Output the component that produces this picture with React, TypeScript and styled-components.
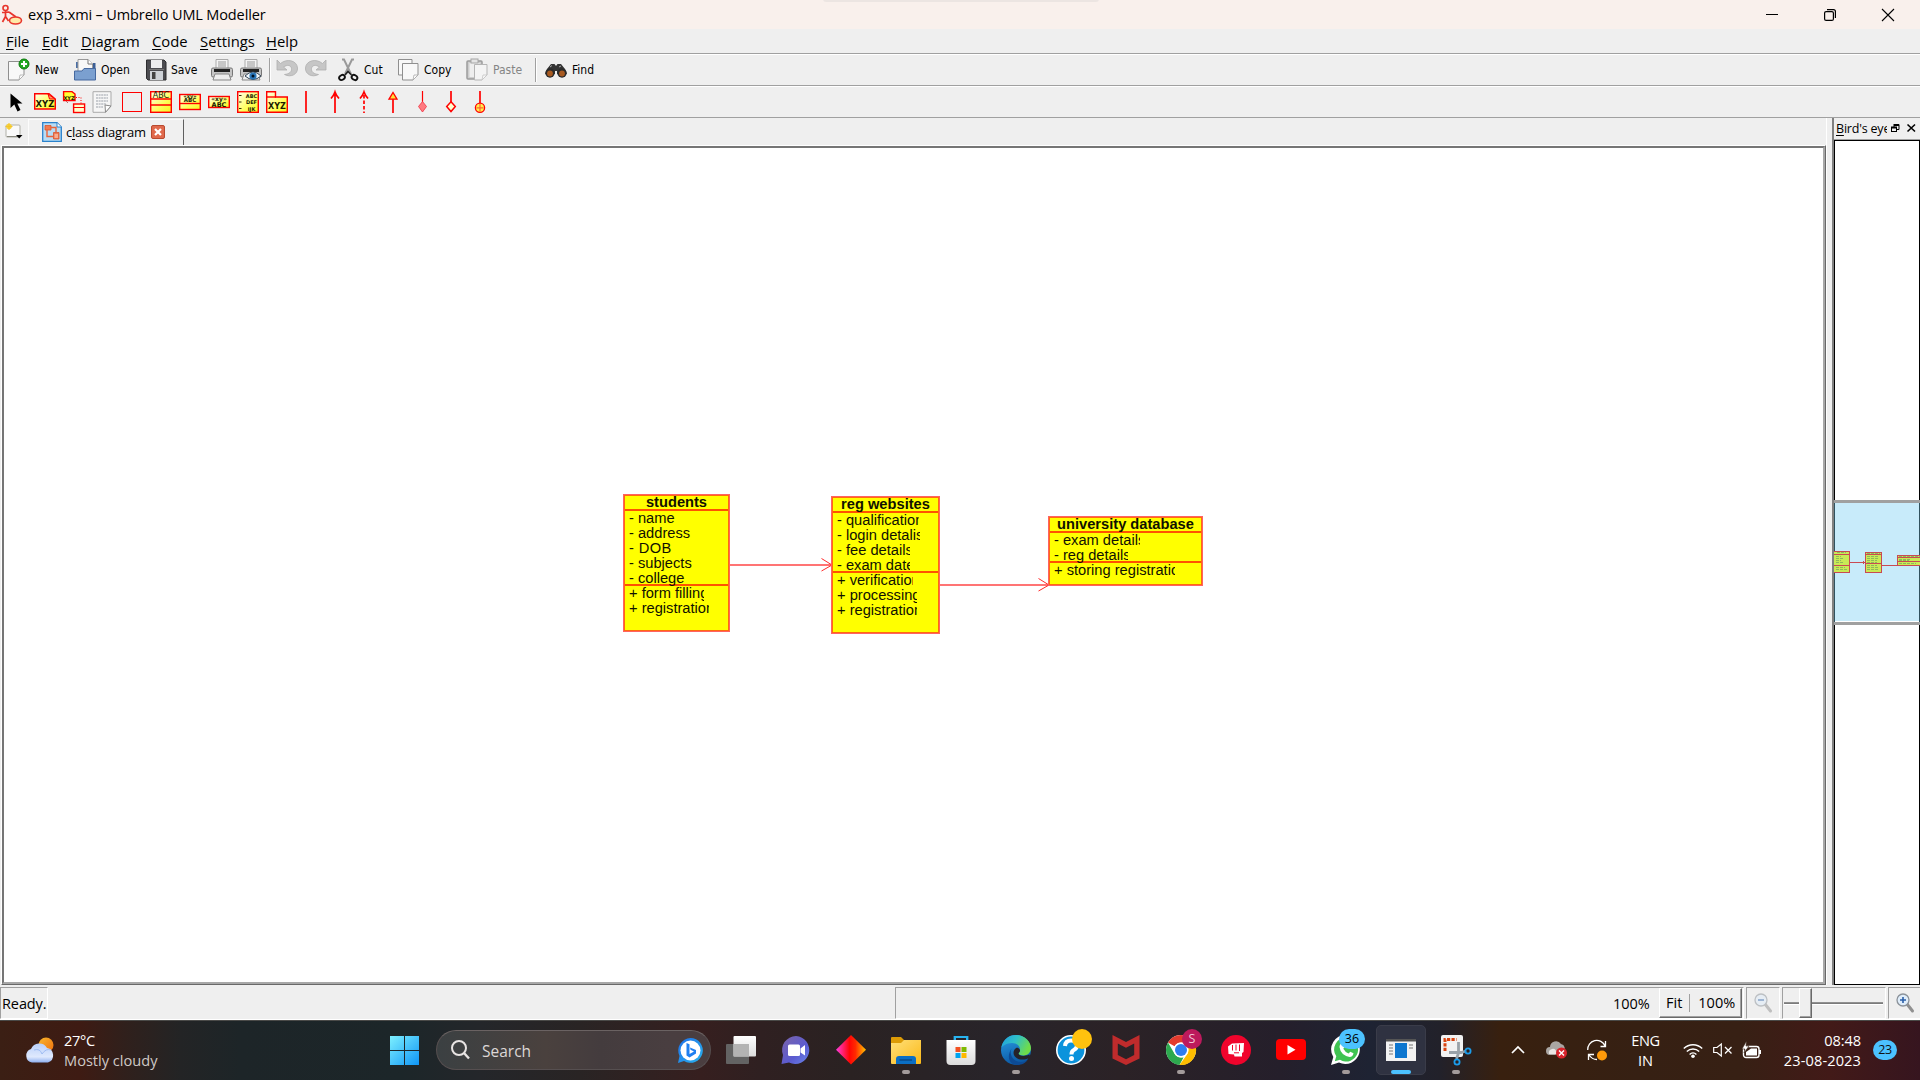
import React from "react";
import styled, { createGlobalStyle } from "styled-components";

const UI = `"Open Sans", "Noto Sans", sans-serif`;
const TOOL = `"DejaVu Sans Condensed", "DejaVu Sans", sans-serif`;

const Global = createGlobalStyle`
  * { box-sizing: border-box; }
  html, body { margin: 0; padding: 0; overflow: hidden; }
  svg { display: block; flex: none; overflow: visible; }
`;

const Screen = styled.div`
  width: 1920px; height: 1080px; display: flex; flex-direction: column;
  background: #efefef; color: #000; font-family: ${UI}; font-size: 14.5px; overflow: hidden;
`;

const Txt = styled.span<{ $ls?: number; $size?: number; $color?: string }>`
  white-space: pre;
  letter-spacing: ${(p) => p.$ls ?? 0}px;
  font-size: ${(p) => (p.$size ? p.$size + "px" : "inherit")};
  color: ${(p) => p.$color ?? "inherit"};
  u { text-decoration-thickness: 1px; text-underline-offset: 2px; }
`;

/* ---------- title + menu ---------- */
const TitleBar = styled.header`
  position: relative; height: 29px; flex: none; display: flex; align-items: center; background: #f9f0ec; padding-left: 2px;
`;
const TitleText = styled(Txt)`margin-left: 6px; line-height: 20px; margin-top: 1px;`;
const TopPill = styled.div`
  position: absolute; left: 823px; top: -4px; width: 276px; height: 6px; border-radius: 4px; background: #ece5e2;
`;
const WinButtons = styled.div`margin-left: auto; display: flex; height: 28px; padding-right: 3px;`;
const WinButton = styled.div`width: 58px; display: flex; align-items: center; justify-content: center;`;

const MenuBar = styled.nav`height: 24px; flex: none; display: flex; padding-left: 6px; line-height: 25px;`;
const MenuItem = styled.div<{ $w: number }>`width: ${(p) => p.$w}px;`;

/* ---------- toolbars ---------- */
const ToolBar = styled.div<{ $h: number; $pl: number }>`
  height: ${(p) => p.$h}px; flex: none; display: flex; align-items: center;
  padding-left: ${(p) => p.$pl}px; border-top: 1px solid #a0a0a0; box-shadow: inset 0 1px 0 #fff;
  font-family: ${TOOL}; font-size: 12px;
`;
const ToolButton = styled.div<{ $w: number; $icon: number; $off?: boolean }>`
  width: ${(p) => p.$w}px; display: flex; align-items: center; color: ${(p) => (p.$off ? "#858585" : "#000")};
  & > svg { margin-right: ${(p) => p.$icon - 22}px; }
  & > span { padding-top: 1px; }
`;
const ToolSep = styled.div<{ $w: number }>`
  width: ${(p) => p.$w}px; height: 24px; border-left: 1px solid #a0a0a0; box-shadow: inset 1px 0 0 #fff;
`;
const ShapeButton = styled.div`width: 29px; height: 22px; padding-left: 4px; flex: none;`;

/* ---------- work area ---------- */
const Work = styled.div`height: 868px; flex: none; display: flex; border-top: 1px solid #a0a0a0;`;
const Main = styled.div`width: 1826px; display: flex; flex-direction: column;`;
const TabRow = styled.div`height: 27px; display: flex; align-items: center;`;
const NewTab = styled.div`width: 28px; height: 27px; padding: 4px 0 0 4px;`;
const Tab = styled.div`
  width: 156px; height: 26px; align-self: flex-end; display: flex; align-items: center; padding: 0 0 2px 13px;
  border-top: 1px solid #fafafa; border-left: 1px solid #fcfcfc; border-right: 1px solid #5f5f5f; background: #f0f0f0;
`;
const TabText = styled(Txt)`width: 85px; margin-left: 4px; line-height: 20px;`;
const Frame = styled.div`
  margin-left: 1px; flex: 1; border: 1px solid; border-color: #fff #696969 #696969 #fff;
`;
const FrameInner = styled.div`
  width: 100%; height: 100%; border: 2px solid; border-color: #757575 #a8a8a8 #a8a8a8 #757575; background: #fff;
`;
const Canvas = styled.div`position: relative; width: 100%; height: 100%; overflow: hidden;`;

const Dock = styled.aside`
  width: 94px; display: flex; flex-direction: column; border-left: 1px solid #fff; padding-left: 5px;
`;
const DockBody = styled.div`flex: 1; display: flex; flex-direction: column; border-left: 2px solid #808080; min-width: 0;`;
const DockHead = styled.div`height: 22px; flex: none; display: flex; align-items: center; padding: 0 4px 1px 2px; border-bottom: 1px solid #a0a0a0;`;
const DockTitle = styled(Txt)`width: 51px; overflow: hidden; margin-right: 4px; line-height: 20px; padding-top: 1px;`;
const Bird = styled.div`
  flex: 1; border: 1px solid #000; background: #fff; display: flex; flex-direction: column;
  padding-top: 359px;
`;
const BirdView = styled.div`
  height: 125px; margin: 0 -1px; border-top: 3px solid #a0a0a0; border-bottom: 3px solid #a0a0a0;
  background: #c8ebfa; box-shadow: inset 1px 0 0 #31525e, inset -1px 0 0 #31525e, inset 0 -1px 0 #fff; overflow: hidden;
`;

/* ---------- UML nodes ---------- */
const Node = styled.div<{ $x: number; $y: number; $w: number; $h: number }>`
  position: absolute; left: ${(p) => p.$x - 4}px; top: ${(p) => p.$y - 148}px; width: ${(p) => p.$w}px; height: ${(p) => p.$h}px;
  background: #ff0; border: 1px solid #ff6262; box-shadow: inset 0 0 0 1px #ff6a10; padding: 1px;
  font-family: "Liberation Sans", Arial, sans-serif; font-size: 14.67px; color: #111100;
`;
const NodeTitle = styled.div`
  height: 15px; line-height: 13px; font-weight: bold; text-align: center; border-bottom: 2px solid #ff5200; white-space: pre;
`;
const NodeList = styled.div<{ $h: number; $last?: boolean }>`
  height: ${(p) => p.$h}px; border-bottom: ${(p) => (p.$last ? "0" : "2px solid #ff5200")};
`;
const Member = styled.div<{ $w: number; $ls?: number }>`
  margin-left: 4px; width: ${(p) => p.$w}px; height: 15px; line-height: 14px; overflow: hidden; white-space: pre;
  letter-spacing: ${(p) => p.$ls ?? 0}px;
`;
const Links = styled.svg`position: absolute; left: -4px; top: -148px;`;

/* ---------- status bar ---------- */
const Status = styled.footer`height: 35px; flex: none; display: flex; align-items: flex-start; padding-top: 2px; border-bottom: 1px solid #fff; line-height: 31px;`;
const Sunken = styled.div<{ $w: number; $ml?: number; $pl?: number }>`
  width: ${(p) => p.$w}px; height: 32px; margin-left: ${(p) => p.$ml ?? 0}px; padding-left: ${(p) => p.$pl ?? 0}px;
  flex: none; display: flex; align-items: center;
  border: 1px solid; border-color: #a0a0a0 #fff #fff #a0a0a0;
`;
const ZoomNow = styled.div`margin-left: auto; width: 46px;`;
const Raised = styled.div`
  width: 83px; height: 30px; display: flex; align-items: center; padding-left: 6px; line-height: 28px; margin-right: 1px;
  border: 1px solid; border-color: #fff #696969 #696969 #fff; box-shadow: inset -1px -1px 0 #a0a0a0;
`;
const FitSep = styled.div`width: 1px; height: 18px; background: #a0a0a0; margin: 0 8px 0 7px;`;
const Slider = styled.div`width: 100px; height: 30px; margin-left: 1px; display: flex; align-items: center;`;
const Rail = styled.div<{ $w: number }>`width: ${(p) => p.$w}px; height: 3px; border-top: 1px solid #909090; border-bottom: 1px solid #fff; background: #7a7a7a;`;
const Handle = styled.div`
  width: 13px; height: 30px; border: 1px solid; border-color: #fff #696969 #696969 #fff; box-shadow: inset -1px -1px 0 #a0a0a0;
`;

/* ---------- taskbar ---------- */
const TaskBar = styled.div`
  height: 60px; flex: none; display: flex; color: #fff; border-top: 1px solid #4a4a48; font-size: 14.6px;
  background: linear-gradient(90deg, #3b1f14 0, #3e1b13 80px, #30201c 125px, #232425 180px, #1d2528 240px, #1c2629 400px, #24262a 480px, #292424 580px, #361f1f 700px, #2f2021 760px, #2a2222 850px, #28242a 1000px, #2b2226 1120px, #251f2b 1280px, #1e2333 1370px, #22212a 1440px, #38200f 1500px, #362013 1640px, #372014 1740px, #421a18 1830px, #36151f 1920px);
`;
const Weather = styled.div`width: 389px; display: flex; align-items: center; padding-left: 24px; height: 58px;`;
const Stack = styled.div<{ $right?: boolean; $center?: boolean; $ml?: number; $w?: number }>`
  display: flex; flex-direction: column; line-height: 20px; margin-left: ${(p) => p.$ml ?? 0}px;
  width: ${(p) => (p.$w ? p.$w + "px" : "auto")};
  align-items: ${(p) => (p.$right ? "flex-end" : p.$center ? "center" : "flex-start")};
`;
const Start = styled.div`width: 47px; padding: 15px 0 0 1px;`;
const Search = styled.div`
  width: 275px; height: 40px; margin-top: 9px; border-radius: 20px; display: flex; align-items: center; padding-left: 14px;
  background: linear-gradient(90deg, #3b4042, #4a413e 40%, #443c3e 60%, #493e40 85%, #4a3e40);
  border: 1px solid #564f50; border-top-color: #6a6262;
`;
const SearchText = styled(Txt)`margin-left: 12px; width: 196px; padding-top: 1px;`;
const Apps = styled.div`display: flex; margin-left: 5px;`;
const AppSlot = styled.div<{ $active?: boolean }>`
  position: relative; width: 50px; height: 50px; margin: 4px 5px 0 0; border-radius: 5px; padding: 9px 0 0 9px;
  background: ${(p) => (p.$active ? "#2f3241" : "transparent")}; border: 1px solid ${(p) => (p.$active ? "#3a3c49" : "transparent")};
`;
const Mark = styled.i<{ $active?: boolean }>`
  position: absolute; bottom: 0; left: ${(p) => (p.$active ? 14 : 20)}px; width: ${(p) => (p.$active ? 20 : 8)}px; height: 4px; border-radius: 2px;
  background: ${(p) => (p.$active ? "#4cc2ff" : "#a39b9b")};
`;
const Badge = styled.span<{ $x: number; $y: number; $w: number; $h: number; $bg: string; $fg?: string }>`
  position: absolute; left: ${(p) => p.$x}px; top: ${(p) => p.$y}px; width: ${(p) => p.$w}px; height: ${(p) => p.$h}px;
  border-radius: 10px; background: ${(p) => p.$bg}; color: ${(p) => p.$fg ?? "#000"}; font-size: 12.5px; line-height: ${(p) => p.$h}px; text-align: center;
`;
const Tray = styled.div`margin-left: 25px; display: flex; align-items: center; flex: 1; height: 58px;`;
const TrayCell = styled.div<{ $w: number }>`width: ${(p) => p.$w}px; display: flex; flex: none;`;
const Count = styled.div`
  width: 24px; height: 20px; margin-left: 12px; border-radius: 10px; background: #4cc2ff; color: #111; font-size: 12.5px;
  line-height: 20px; text-align: center; letter-spacing: -0.5px;
`;

/* ---------- icons ---------- */
const Svg = ({ w = 22, h = 22, children }: { w?: number; h?: number; children: React.ReactNode }) => (
  <svg width={w} height={h} viewBox={`0 0 ${w} ${h}`} fill="none">{children}</svg>
);
const Page = ({ x = 0, y = 0, w = 15, h = 18, o = 1 }) => (
  <g transform={`translate(${x} ${y})`} opacity={o}>
    <path d={`M.5 .5H${w}V${h - 5}L${w - 5} ${h}H.5Z`} fill="#f8f8f8" stroke="#8f8f8f" />
    <path d={`M${w} ${h - 5}H${w - 4}L${w - 5} ${h}Z`} fill="#fff" stroke="#a8a8a8" strokeWidth=".8" />
  </g>
);
const Printer = ({ eye }: { eye?: boolean }) => (
  <Svg>
    <path d="M5 .5H17V10H5Z" fill="#f4f4f4" stroke="#aaa" />
    <path d="M7 3H15M7 5H15M7 7H15" stroke="#999" />
    <rect x=".5" y="9" width="21" height="9" rx="1.5" fill="#c4c4c4" stroke="#777" />
    <rect x="3" y="10" width="16" height="3" fill="#222" />
    <path d="M4 15H18L20 21H2Z" fill="#eee" stroke="#888" />
    {eye && (<><path d="M5 17Q13 9 21 17Q13 24 5 17Z" fill="#f4f8fb" stroke="#345" /><circle cx="13" cy="17" r="3.6" fill="#2a76b8" /><circle cx="13" cy="17" r="1.5" fill="#012" /></>)}
  </Svg>
);
const Undo = ({ flip }: { flip?: boolean }) => (
  <Svg><g transform={flip ? "translate(22 0) scale(-1 1)" : undefined}>
    <path d="M1 1L1 11H11L7.5 8C11 5.500 15 6 15.500 9.500C16 13 13 15 8.500 15.500C15 19 22 15 21.500 9C21 1.500 11 -1 4.500 4.500Z" fill="#c6c6c6" stroke="#aeaeae" strokeWidth=".8" />
  </g></Svg>
);
const GradientDefs = () => (
  <svg width="0" height="0" style={{ position: "absolute" }}>
    <defs>
      <linearGradient id="yel" x1="0" y1="0" x2="1" y2="1"><stop offset="0" stopColor="#fffff0" /><stop offset=".6" stopColor="#ffff5a" /><stop offset="1" stopColor="#f5f520" /></linearGradient>
      <linearGradient id="win" gradientUnits="userSpaceOnUse" x1="0" y1="0" x2="29" y2="29"><stop offset="0" stopColor="#7df0ff" /><stop offset="1" stopColor="#0f95f5" /></linearGradient>
      <linearGradient id="dia" x1="0" y1="0" x2="1" y2="0"><stop offset="0" stopColor="#ff3de0" /><stop offset=".45" stopColor="#ff0505" /><stop offset=".65" stopColor="#ff2a00" /><stop offset="1" stopColor="#ffc400" /></linearGradient>
      <linearGradient id="cht" x1="0" y1="0" x2="1" y2="1"><stop offset="0" stopColor="#7c64a8" /><stop offset=".6" stopColor="#5b5bd0" /><stop offset="1" stopColor="#6a86ea" /></linearGradient>
      <linearGradient id="fol" x1="0" y1="0" x2="1" y2="1"><stop offset="0" stopColor="#ffe07a" /><stop offset="1" stopColor="#fbb917" /></linearGradient>
      <linearGradient id="edg" x1="0" y1="0" x2="1" y2=".4"><stop offset="0" stopColor="#1f9de0" /><stop offset=".5" stopColor="#2fc0c8" /><stop offset="1" stopColor="#6fdc4a" /></linearGradient>
      <linearGradient id="ed2" x1="0" y1="0" x2=".3" y2="1"><stop offset="0" stopColor="#2a9ee6" /><stop offset="1" stopColor="#0c59a4" /></linearGradient>
      <linearGradient id="cld" x1="0" y1="0" x2="0" y2="1"><stop offset="0" stopColor="#b9d0fa" /><stop offset=".7" stopColor="#dfe9fd" /><stop offset="1" stopColor="#8fb0f0" /></linearGradient>
      <linearGradient id="sun" x1="0" y1="0" x2="1" y2="1"><stop offset="0" stopColor="#f8b62c" /><stop offset="1" stopColor="#f0700e" /></linearGradient>
      <linearGradient id="gry" x1="0" y1="0" x2="0" y2="1"><stop offset="0" stopColor="#fff" /><stop offset="1" stopColor="#dcdcdc" /></linearGradient>
      <linearGradient id="bin" x1="0" y1="0" x2="1" y2="1"><stop offset="0" stopColor="#1f6fe8" /><stop offset="1" stopColor="#28b4f0" /></linearGradient>
    </defs>
  </svg>
);
const red = { stroke: "#f00", strokeWidth: 1.4 };
const T = ({ x, y, s, children, b = true }: { x: number; y: number; s: number; children: string; b?: boolean }) => (
  <text x={x} y={y} fontSize={s} fontFamily="DejaVu Sans, sans-serif" fontWeight={b ? 700 : 400} fill="#1a1a00" textAnchor="middle" xmlSpace="preserve">{children}</text>
);
const shapes: React.ReactNode[] = [
  <path d="M5.500 2.500V17L9.300 13.500L12.500 20.500L15.500 19L12.300 12.500H17.500Z" fill="#000" />,
  <><path d="M.7 2.700H15L21.300 8V18H.7Z" fill="url(#yel)" {...red} /><path d="M14 3L15.500 8H21Z" fill="#ff9a60" {...red} strokeWidth={1} /><T x={11} y={16} s={8.5}>XYZ</T></>,
  <><path d="M.6 .6H9L12 3V9.500H.6Z" fill="#ff3" {...red} /><T x={6} y={8.5} s={5}>XYZ</T><path d="M13 6.500H18V13" stroke="#f00" strokeDasharray="1 1.500" /><rect x="10.600" y="13" width="11" height="8.500" fill="#ffc" {...red} /><path d="M11 16.500H21" {...red} strokeWidth={1} /><path d="M3 10L5 12" stroke="#b66" /></>,
  <><path d="M1 .7H19V15L13.500 21.300H1Z" fill="#f6f6f6" stroke="#aaa" /><path d="M4 4H16M4 7H16M4 10H16M4 13H14M4 16H11" stroke="#9a9fa8" strokeWidth="1.200" strokeDasharray="2 .6" /><path d="M19 15L13 14L13.500 21.300Z" fill="#fff" stroke="#888" /></>,
  <rect x="1.500" y="1.500" width="19" height="19" {...red} strokeWidth={1} />,
  <><rect x=".7" y=".7" width="20.600" height="20.600" fill="url(#yel)" {...red} /><T x={11} y={7} s={8} b={false}>ABC</T><path d="M1 8H21M1 14H21" {...red} /></>,
  <><rect x=".7" y="3.500" width="20.600" height="15" fill="url(#yel)" {...red} /><T x={11} y={7} s={5}>«xy»</T><T x={11} y={11.2} s={5.5}>ABC</T><path d="M1 12.500H21" {...red} /></>,
  <><rect x=".7" y="5.500" width="20.600" height="11" fill="url(#yel)" {...red} /><T x={11} y={9.5} s={6}>«xy»</T><T x={11} y={15.5} s={6.5}>ABC</T></>,
  <><rect x=".7" y=".7" width="20.600" height="20.600" fill="url(#yel)" {...red} /><T x={14.5} y={6.5} s={5}>ABC</T><T x={14.5} y={13} s={5}>DEF</T><T x={14.5} y={19.5} s={5}>IJK</T><path d="M2 4.500H4.500M2 11H4.500M2 17.500H4.500" stroke="#330" /></>,
  <><path d="M.7 .7H9.500V6H21.300V21.300H.7Z" fill="url(#yel)" {...red} /><path d="M1 6H10" {...red} /><T x={11} y={18} s={8}>XYZ</T></>,
  <path d="M11 0V22" stroke="#f00" strokeWidth="1.700" />,
  <path d="M11 1V22M7 7.500Q10 4 11 1Q12 4 15 7.500" stroke="#f00" strokeWidth="1.700" />,
  <><path d="M11 4V22" stroke="#f00" strokeWidth="1.700" strokeDasharray="3.500 2" /><path d="M7 7.500Q10 4 11 1Q12 4 15 7.500" stroke="#f00" strokeWidth="1.700" /></>,
  <><path d="M11 8V22" stroke="#f00" strokeWidth="1.700" /><path d="M7 8.200L11 1.500L15 8.200Z" fill="#ffe23a" stroke="#f00" strokeWidth="1.300" /></>,
  <><path d="M11.500 0V11" stroke="#f00" strokeWidth="1.200" /><path d="M11.500 10.500L15.500 15.500L11.500 21L7.500 15.500Z" fill="#ff7a80" stroke="#f03040" strokeWidth=".8" /></>,
  <><path d="M11 0V11" stroke="#f00" strokeWidth="1.700" /><path d="M11 10.800L15.300 15.500L11 20.500L6.700 15.500Z" fill="#ffffd0" stroke="#f00" strokeWidth="1.500" /></>,
  <><path d="M11 0V12" stroke="#f00" strokeWidth="1.700" /><circle cx="11" cy="16.800" r="4.600" fill="#fff04a" stroke="#f00" strokeWidth="1.300" /><path d="M11 13V20.500M7.500 16.800H14.500" stroke="#f63" strokeWidth="1.200" /></>,
];

const Glass = ({ plus }: { plus?: boolean }) => (
  <Svg w={18} h={20}><g opacity={plus ? 1 : 0.5}>
    <path d="M11 11L16.500 18" stroke="#909090" strokeWidth="3" strokeLinecap="round" />
    <circle cx="7" cy="7" r="6" fill="#dfedfa" stroke="#8b9299" strokeWidth="1.300" />
    <path d={plus ? "M4 7H10M7 4V10" : "M4 7H10"} stroke="#2b5fa8" strokeWidth="1.600" />
  </g></Svg>
);

const taskIcons: { icon: React.ReactNode; mark?: boolean; active?: boolean; badge?: React.ReactNode }[] = [
  { icon: <><rect x="0" y="9" width="23" height="20" rx="1" fill="#636363" /><rect x="7.500" y="1" width="22.500" height="20.500" rx="1" fill="url(#gry)" /><path d="M7.500 9H23V21.500H7.500Z" fill="#b3b3b3" /></> },
  { icon: <><path d="M15 1A14 14 0 1 1 8 27.500L.5 29L2 20A14 14 0 0 1 15 1Z" fill="url(#cht)" /><rect x="7" y="9.500" width="12" height="11.500" rx="1.500" fill="#fff" /><path d="M19.500 13.500L24 10V20.500L19.500 17.500Z" fill="#fff" /></> },
  { icon: <path d="M15 0L30 14.800L15 29.500L0 14.800Z" fill="url(#dia)" /> },
  { mark: true, icon: <><path d="M0 3Q0 2 1 2H10L13 5V12H0Z" fill="#dc9b06" /><path d="M0 8H10L13 5H30V28Q30 29 29 29H1Q0 29 0 28Z" fill="url(#fol)" /><path d="M5 29V24Q5 21 8 21H22Q25 21 25 24V29Z" fill="#0b6fc4" /><path d="M8.500 25H21" stroke="#0a4a8a" strokeWidth="1.500" /></> },
  { icon: <><path d="M8.500 8V2H21.500V8" stroke="#28a8ea" strokeWidth="1.800" /><path d="M.5 5H29.500V26Q29.500 30 25.500 30H4.500Q.5 30 .5 26Z" fill="url(#gry)" /><path d="M9 5V2H21V5" stroke="#28b4f0" strokeWidth="2" /><rect x="9.500" y="12" width="5" height="5" fill="#f25022" /><rect x="15.500" y="12" width="5" height="5" fill="#7fba00" /><rect x="9.500" y="18" width="5" height="5" fill="#00a4ef" /><rect x="15.500" y="18" width="5" height="5" fill="#ffb900" /></> },
  { mark: true, icon: <><circle cx="15" cy="15" r="15" fill="url(#ed2)" /><path d="M.4 12.500C2 4.500 8 0 15 0C24 0 30 7 30 13C30 18 26 20.500 22.500 20.500C19.500 20.500 17.500 19.500 17.500 18.500C17.500 17.500 19 17 19 14.500C19 11 15.500 8 11 8C5.500 8 1.500 11 .4 12.500Z" fill="url(#edg)" /><path d="M11 13C8 17 10 27 20 27C23 27 26 25.500 27.500 23.500C25 28 21 30 16 30C8 30 5 21 11 13Z" fill="#0d4a94" /><path d="M19 15C19.300 17.500 17.500 17.800 17.500 18.500C17.500 20 21 22.500 28.500 19.500L27.500 23C23 26 13 25 12.500 18Q12.500 14 16 12.500Q18.500 13 19 15Z" fill="#262329" /><path d="M28.500 20L30 21L28 24.500L26.500 23Z" fill="#28242a" /></> },
  { badge: <Badge $x={25} $y={3} $w={20} $h={20} $bg="#ffc20e" />, icon: <><circle cx="15" cy="15" r="14.200" fill="#0b93dc" stroke="#fff" strokeWidth="1.600" /><path d="M9 11Q9.500 5.500 15 5.500Q21 5.500 21 10.500Q21 13.500 17.500 15.200Q15.500 16.300 15.500 19.500" stroke="#fff" strokeWidth="4" /><circle cx="15.500" cy="23.500" r="2.500" fill="#fff" /></> },
  { icon: <path d="M1.500 0L15 7L28.500 0V23.500L15 30L1.500 23.500ZM6.800 8.500V20L15 24.200L23.200 20V8.500L15 12.800Z" fillRule="evenodd" fill="#c02b2c" /> },
  { mark: true, badge: <Badge $x={25} $y={3} $w={20} $h={20} $bg="#bc1a5c" $fg="#f3c6d8">S</Badge>, icon: <><circle cx="15" cy="15" r="15" fill="#fff" /><path d="M2 7.500A15 15 0 0 1 28 7.500H15A7.500 7.500 0 0 0 8.500 11.300Z" fill="#e33b2e" /><path d="M2 7.500L8.500 18.800A7.500 7.500 0 0 0 15 22.500H17.500L13.500 30A15 15 0 0 1 2 7.500Z" fill="#2da94f" /><path d="M28 7.500A15 15 0 0 1 13.500 30L21.500 18.700A7.500 7.500 0 0 0 15 7.500Z" fill="#fdbd00" /><circle cx="15" cy="15" r="7.400" fill="#fff" /><circle cx="15" cy="15" r="6" fill="#2e7df0" /></> },
  { icon: <><circle cx="15" cy="15" r="15" fill="#f0042c" /><path d="M7 11.500L11 8.500L23 8L22.500 17L21 18V21.500H13.500L13 19.500L7.500 19Z" fill="#fff" /><path d="M11.500 10V15.500M15 9.500V15.500M18.500 9.500V16M13 17.800H18" stroke="#f0042c" strokeWidth="1" /></> },
  { icon: <><rect x="0" y="4" width="30" height="21" rx="4" fill="#f00" /><path d="M11.500 10V19.500L19.500 14.700Z" fill="#fff" /></> },
  { mark: true, badge: <Badge $x={17} $y={3} $w={26} $h={20} $bg="#4cc2ff">36</Badge>, icon: <><path d="M15.500 0A14.500 14.500 0 1 1 8 27.500L0 30L2.300 22A14.500 14.500 0 0 1 15.500 0Z" fill="#fff" /><path d="M15.500 2.500A12 12 0 1 1 9 24.800L3.800 26.300L5.300 21.300A12 12 0 0 1 15.500 2.500Z" fill="#3fc351" /><path d="M10 8.500L12.500 9L13.500 12L12.300 13.800Q14 17 17.500 18.500L19.300 16.800L22.500 18.300Q22 22 18.500 22Q9.500 20 8.500 12Q8.500 9.500 10 8.500Z" fill="#fff" /></> },
  { active: true, icon: <><rect x="0" y="4" width="30" height="22" fill="#f2f2f2" /><rect x="0" y="4" width="30" height="2.500" fill="#555" /><path d="M3 10H7M3 13H7M3 16H7M3 19H7M23 10H27M23 13H27" stroke="#777" strokeWidth="1.200" /><rect x="9" y="8" width="12" height="15" fill="#0d76cf" /></> },
  { mark: true, icon: <><rect x="0" y="0" width="22" height="22" rx="2" fill="#f2f2f2" /><path d="M4 16V4.500H15.500" stroke="#d9430f" strokeWidth="3" strokeDasharray="3.200 1.300" /><path d="M17.500 7V18L15.500 24M8 17.500H20L25 16" stroke="#9aa2a8" strokeWidth="2.800" /><circle cx="16" cy="27" r="2.600" stroke="#1b9cea" strokeWidth="1.800" /><circle cx="27" cy="16" r="2.600" stroke="#1b9cea" strokeWidth="1.800" /></> },
];

const Miniature = () => (
  <svg width="86" height="119" viewBox="0 0 86 119" shapeRendering="crispEdges">
    <g fill="#c9ea56" stroke="#c94a52">
      <rect x="-3.500" y="48.500" width="19" height="21" /><rect x="31.500" y="49.500" width="16" height="20" /><rect x="63.500" y="52.500" width="26" height="10" />
    </g>
    <path d="M0 51.500H16M0 62.500H16M31 51.500H48M31 60.500H48M63 54.500H86M63 58.500H86M16 59.500H31M48 62.500H63M29.500 58V61" stroke="#c94a52" />
    <g stroke="#8fb85a" strokeDasharray="3 1">
      <path d="M3 49.500H12M2 53.500H7M2 55.500H9M2 57.500H7M2 59.500H10M2 64.500H11M2 66.500H13M33 50.500H46M33 53.500H44M33 55.500H44M33 57.500H43M33 59.500H43M33 62.500H43M33 64.500H44M33 66.500H44M65 53.500H86M65 56.500H77M65 57.500H75M65 60.500H82" />
    </g>
  </svg>
);

export default function App() {
  return (
    <Screen>
      <Global />
      <GradientDefs />
      <TitleBar>
        <TopPill />
        <Svg w={20} h={20}>
          <circle cx="3.500" cy="3" r="2.500" stroke="#e8352c" strokeWidth="1.600" />
          <path d="M3.500 5.500V12M0 7.500L7 7M3.500 11.500L.5 17M3.500 11.500L6.500 16M7 7L14 12" stroke="#e8352c" strokeWidth="1.700" />
          <ellipse cx="13.500" cy="15.500" rx="6" ry="3.500" fill="#ffe9a8" stroke="#e8352c" strokeWidth="1.600" />
        </Svg>
        <TitleText $ls={-0.13}>exp 3.xmi – Umbrello UML Modeller</TitleText>
        <WinButtons>
          <WinButton><Svg w={12} h={12}><path d="M0 5.500H12" stroke="#000" /></Svg></WinButton>
          <WinButton><Svg w={12} h={12}><rect x=".6" y="2.600" width="8.800" height="8.800" rx="1.500" stroke="#000" strokeWidth="1.200" /><path d="M3 .6H9.500Q11.400 .6 11.400 2.500V9" stroke="#000" strokeWidth="1.200" /></Svg></WinButton>
          <WinButton><Svg w={12} h={12}><path d="M0 0L12 12M12 0L0 12" stroke="#000" strokeWidth="1.100" /></Svg></WinButton>
        </WinButtons>
      </TitleBar>

      <MenuBar>
        {([["File", 36], ["Edit", 39], ["Diagram", 71], ["Code", 48], ["Settings", 66], ["Help", 40]] as [string, number][]).map(([t, w]) => (
          <MenuItem key={t} $w={w}><Txt $size={14.8}><u>{t[0]}</u>{t.slice(1)}</Txt></MenuItem>
        ))}
      </MenuBar>

      <ToolBar $h={32} $pl={8}>
        <ToolButton $w={66} $icon={27}>
          <Svg><Page x={0} y={2} w={16} h={19} /><circle cx="16" cy="5" r="5" fill="#22a822" stroke="#0c7a0c" /><path d="M16 2V8M13 5H19" stroke="#fff" strokeWidth="2" /></Svg>
          <Txt>New</Txt>
        </ToolButton>
        <ToolButton $w={72} $icon={27}>
          <Svg><path d="M2 9V3H6V9" fill="#4a6fa5" /><path d="M4 .5H14L18.500 5V14H4Z" fill="#f8f8f8" stroke="#999" /><path d="M14 .5V5H18.500" fill="#fff" stroke="#777" /><path d="M19 4H21.500V12H19Z" fill="#3c5f96" /><path d="M.5 12H8L10 9.500H21.500V21H.5Z" fill="#7ba0d0" stroke="#46699f" /></Svg>
          <Txt>Open</Txt>
        </ToolButton>
        <ToolButton $w={65} $icon={25}>
          <Svg><path d="M.5 1H18L20 3V21H2L.5 19.500Z" fill="#4c4c50" stroke="#2c2c2e" /><rect x="5" y="1" width="11" height="8" fill="#eee" /><rect x="4" y="12" width="13" height="9" fill="#cfd3d8" /><rect x="6" y="13" width="3.500" height="7" fill="#444" /><path d="M3 10.500H18" stroke="#777" /></Svg>
          <Txt>Save</Txt>
        </ToolButton>
        <ToolButton $w={29} $icon={22}><Printer /></ToolButton>
        <ToolButton $w={29} $icon={22}><Printer eye /></ToolButton>
        <ToolSep $w={7} />
        <ToolButton $w={29} $icon={22}><Undo /></ToolButton>
        <ToolButton $w={33} $icon={22}><Undo flip /></ToolButton>
        <ToolButton $w={60} $icon={26}>
          <Svg><path d="M4 .5L6 0.500L13 15M16 .5L14 .5L7 15" stroke="#9a9a9a" strokeWidth="2" /><ellipse cx="4" cy="18.500" rx="3" ry="2.300" transform="rotate(-30 4 18.500)" stroke="#111" strokeWidth="1.900" /><ellipse cx="16.500" cy="18.500" rx="3" ry="2.300" transform="rotate(30 16.500 18.500)" stroke="#111" strokeWidth="1.900" /><path d="M7 16L10 12.500L13.500 16" stroke="#222" strokeWidth="1.700" /></Svg>
          <Txt>Cut</Txt>
        </ToolButton>
        <ToolButton $w={68} $icon={26}>
          <Svg><Page x={0} y={0} w={14} h={16} /><Page x={4} y={4} w={16} h={17} /></Svg>
          <Txt>Copy</Txt>
        </ToolButton>
        <ToolButton $w={69} $icon={27} $off>
          <Svg><g opacity=".6"><rect x="1" y="2" width="15" height="18" rx="1" fill="#b8b8b8" stroke="#666" strokeWidth="1.500" /><rect x="3.500" y="4" width="10" height="14" fill="#eee" /><rect x="5" y="0" width="7" height="4" fill="#ddd" stroke="#777" /><Page x={8} y={5} w={13} h={16} /></g></Svg>
          <Txt>Paste</Txt>
        </ToolButton>
        <ToolSep $w={10} />
        <ToolButton $w={70} $icon={27}>
          <Svg><path d="M6 5H9.500L11 7L12.500 5H16L20 10L22 15H12V12H10V15H0L2 10Z" fill="#333" /><circle cx="5" cy="14" r="4.700" fill="#2a2a2a" /><circle cx="17" cy="14" r="4.700" fill="#2a2a2a" /><circle cx="5" cy="14.500" r="2.900" fill="#a85a20" /><circle cx="17" cy="14.500" r="2.900" fill="#a85a20" /><path d="M5 8L7 6.500M14 8L16 7" stroke="#aaa" /></Svg>
          <Txt>Find</Txt>
        </ToolButton>
      </ToolBar>

      <ToolBar $h={32} $pl={1}>
        {shapes.map((s, i) => (<ShapeButton key={i}><Svg>{s}</Svg></ShapeButton>))}
      </ToolBar>

      <Work>
        <Main>
          <TabRow>
            <NewTab>
              <Svg w={20} h={18}><rect x="2" y="3" width="14" height="12" rx="1" fill="#fafafa" stroke="#b0b0a8" /><path d="M3 14.500H16" stroke="#8a8a80" /><circle cx="5" cy="4.500" r="2.800" fill="#f8d23c" /><path d="M5 1V8M1.500 4.500H8.500" stroke="#f3c52a" /><path d="M12 13H18.500L15.200 16.500Z" fill="#000" /></Svg>
            </NewTab>
            <Tab>
              <Svg w={20} h={20}><path d="M.7 .7H15L19.300 5V19.300H.7Z" fill="#b8dcf5" stroke="#2a82cc" strokeWidth="1.300" /><path d="M15 .7V5H19.300" fill="#fff" stroke="#2a82cc" /><path d="M3 3.500H9V8H3ZM11.500 10.500H17V17H11.500Z" fill="#f07a50" stroke="#d9532c" strokeWidth=".8" /><path d="M5 8V14.500H11.500M9 5.500H14V10" stroke="#e8623a" strokeWidth="1.400" /><path d="M12.500 13H16M12.500 15H16" stroke="#ffe0d0" /></Svg>
              <TabText $ls={-0.22} $size={13}>c<u>l</u>ass diagram</TabText>
              <Svg w={14} h={14}><rect x=".5" y=".5" width="13" height="13" rx="1.500" fill="#e0694c" stroke="#b84a30" /><path d="M4 4L10 10M10 4L4 10" stroke="#fff" strokeWidth="2.200" /></Svg>
            </Tab>
          </TabRow>
          <Frame>
            <FrameInner>
              <Canvas>
                <Links width="1400" height="800" viewBox="0 0 1400 800" fill="none">
                  <path d="M730 565H832M940 585H1049" stroke="#ff7474" strokeWidth="2" />
                  <path d="M821.500 558.500L832 565L821.500 571M1038.500 578.500L1049 585L1038.500 591" stroke="#ff2a2a" />
                </Links>
                <Node $x={623} $y={494} $w={107} $h={138}>
                  <NodeTitle>students</NodeTitle>
                  <NodeList $h={75}>
                    <Member $w={60}>- name</Member><Member $w={64}>- address</Member><Member $w={43} $ls={0.4}>- DOB</Member><Member $w={66}>- subjects</Member><Member $w={60}>- college</Member>
                  </NodeList>
                  <NodeList $h={40} $last><Member $w={75}>+ form filling</Member><Member $w={80}>+ registration</Member></NodeList>
                </Node>
                <Node $x={831} $y={496} $w={109} $h={138}>
                  <NodeTitle>reg websites</NodeTitle>
                  <NodeList $h={60}>
                    <Member $w={82}>- qualification</Member><Member $w={83}>- login detalis</Member><Member $w={73}>- fee details</Member><Member $w={73}>- exam date</Member>
                  </NodeList>
                  <NodeList $h={50} $last><Member $w={76}>+ verification</Member><Member $w={80}>+ processing</Member><Member $w={80}>+ registration</Member></NodeList>
                </Node>
                <Node $x={1048} $y={516} $w={155} $h={70}>
                  <NodeTitle>university database</NodeTitle>
                  <NodeList $h={30}><Member $w={86}>- exam details</Member><Member $w={74}>- reg details</Member></NodeList>
                  <NodeList $h={20} $last><Member $w={121}>+ storing registration</Member></NodeList>
                </Node>
              </Canvas>
            </FrameInner>
          </Frame>
        </Main>
        <Dock>
          <DockBody>
            <DockHead>
              <DockTitle $ls={-0.2} $size={12.5}><u>B</u>ird's eye view</DockTitle>
              <Svg w={9} h={10}><path d="M3 1.500H8V6.500H6M3 2.500H8M3 1V4" stroke="#000" /><rect x=".5" y="4.500" width="5" height="4" stroke="#000" /><path d="M0 4.500H6" stroke="#000" strokeWidth="2" /></Svg>
              <Svg w={16} h={10}><path d="M7.500 1.500L15 8.500M15 1.500L7.500 8.500" stroke="#000" strokeWidth="1.600" /></Svg>
            </DockHead>
            <Bird><BirdView><Miniature /></BirdView></Bird>
          </DockBody>
        </Dock>
      </Work>

      <Status>
        <Sunken $w={48} $pl={1}><Txt $ls={-0.1}>Ready.</Txt></Sunken>
        <Sunken $w={849} $ml={847}>
          <ZoomNow><Txt>100%</Txt></ZoomNow>
          <Raised><Txt>Fit</Txt><FitSep /><Txt>100%</Txt></Raised>
        </Sunken>
        <Sunken $w={34} $ml={2} $pl={7}><Glass /></Sunken>
        <Sunken $w={104} $ml={2}><Slider><Rail $w={15} /><Handle /><Rail $w={71} /></Slider></Sunken>
        <Sunken $w={34} $ml={2} $pl={7}><Glass plus /></Sunken>
      </Status>

      <TaskBar>
        <Weather>
          <Svg w={32} h={26}><circle cx="22" cy="8" r="7.500" fill="url(#sun)" /><path d="M8 25.500A7 7 0 0 1 7 12A9 9 0 0 1 23 11A7.500 7.500 0 0 1 24 25.500Z" fill="url(#cld)" /><path d="M10 13Q16 11 18 17Q22 11 27 13" stroke="#9fbcf2" /></Svg>
          <Stack $ml={8}><Txt $ls={-0.3}>27°C</Txt><Txt $color="#cfc9c6">Mostly cloudy</Txt></Stack>
        </Weather>
        <Start><Svg w={29} h={29}><path d="M0 0H14V14H0ZM15 0H29V14H15ZM0 15H14V29H0ZM15 15H29V29H15Z" fill="url(#win)" /></Svg></Start>
        <Search>
          <Svg w={19} h={20}><circle cx="8" cy="8" r="7" stroke="#e8e4e3" strokeWidth="2" /><path d="M13 13L18 18.500" stroke="#e8e4e3" strokeWidth="2.400" /></Svg>
          <SearchText $size={15.5} $color="#dcd7d6">Search</SearchText>
          <Svg w={25} h={25}><path d="M12.500 0A12.400 12.400 0 1 1 6 23L0 25L1.500 18A12.500 12.500 0 0 1 12.500 0Z" fill="url(#bin)" /><circle cx="12.500" cy="12.500" r="10" fill="#fff" /><path d="M8.500 5L11.500 6.200V16L16 13.500L12.500 11.800L12 9.500L18 12V15.500L11.500 19.500L8.500 17.500Z" fill="#1f7ff0" /></Svg>
        </Search>
        <Apps>
          {taskIcons.map((t, i) => (
            <AppSlot key={i} $active={t.active}>
              <Svg w={30} h={30}>{t.icon}</Svg>
              {t.badge}
              {(t.mark || t.active) && <Mark $active={t.active} />}
            </AppSlot>
          ))}
        </Apps>
        <Tray>
          <TrayCell $w={36}><Svg w={14} h={8}><path d="M1 7L7 1L13 7" stroke="#fff" strokeWidth="1.700" /></Svg></TrayCell>
          <TrayCell $w={40}><Svg w={20} h={16}><path d="M3 13A4 4 0 0 1 3 5A6 6 0 0 1 14 2A4.500 4.500 0 0 1 16 10L8 13Z" fill="#aaa6a3" /><path d="M2 12Q1 8 5 7Q9 6 10 12Z" fill="#e8e6e4" /><circle cx="14.500" cy="11" r="5.500" fill="#d8242c" /><path d="M12 8.500L17 13.500M17 8.500L12 13.500" stroke="#fff" strokeWidth="1.400" /></Svg></TrayCell>
          <TrayCell $w={44}><Svg w={20} h={20}><path d="M.7 10A9 9 0 0 1 18 6M18.500 1V6.500H13.500M1.500 20V14.500H7M2 15Q5 19.500 10 19.500" stroke="#fff" strokeWidth="1.300" /><circle cx="15" cy="15.500" r="5" fill="#ff9a0a" /></Svg></TrayCell>
          <Stack $center $w={29}><Txt $ls={-0.4}>ENG</Txt><Txt>IN</Txt></Stack>
          <Stack $ml={23} $w={30}><Svg w={20} h={15}><path d="M.8 5.500A13 13 0 0 1 19.200 5.500M3.800 8.500A9 9 0 0 1 16.200 8.500M6.600 11.400A5 5 0 0 1 13.400 11.400" stroke="#fff" strokeWidth="1.400" /><circle cx="10" cy="13.200" r="1.800" fill="#fff" /></Svg></Stack>
          <TrayCell $w={29}><Svg w={20} h={14}><path d="M.7 4.500H4L8.300 1V13L4 9.500H.7Z" stroke="#fff" strokeWidth="1.200" /><path d="M12 4L18.500 10.500M18.500 4L12 10.500" stroke="#fff" strokeWidth="1.300" /></Svg></TrayCell>
          <TrayCell $w={24}><Svg w={20} h={18}><rect x="1.500" y="5.500" width="15.500" height="11" rx="2.500" stroke="#fff" strokeWidth="1.400" /><path d="M9 7.500H15V14.500H4V11Z" fill="#fff" /><path d="M18 9V13" stroke="#fff" strokeWidth="2" /><path d="M4.500 0L0 8H3L2 12L7 5H4Z" fill="#fff" stroke="#362013" strokeWidth=".6" /></Svg></TrayCell>
          <Stack $right $w={95}><Txt $ls={-0.1}>08:48</Txt><Txt $ls={0.1}>23-08-2023</Txt></Stack>
          <Count>23</Count>
        </Tray>
      </TaskBar>
    </Screen>
  );
}
